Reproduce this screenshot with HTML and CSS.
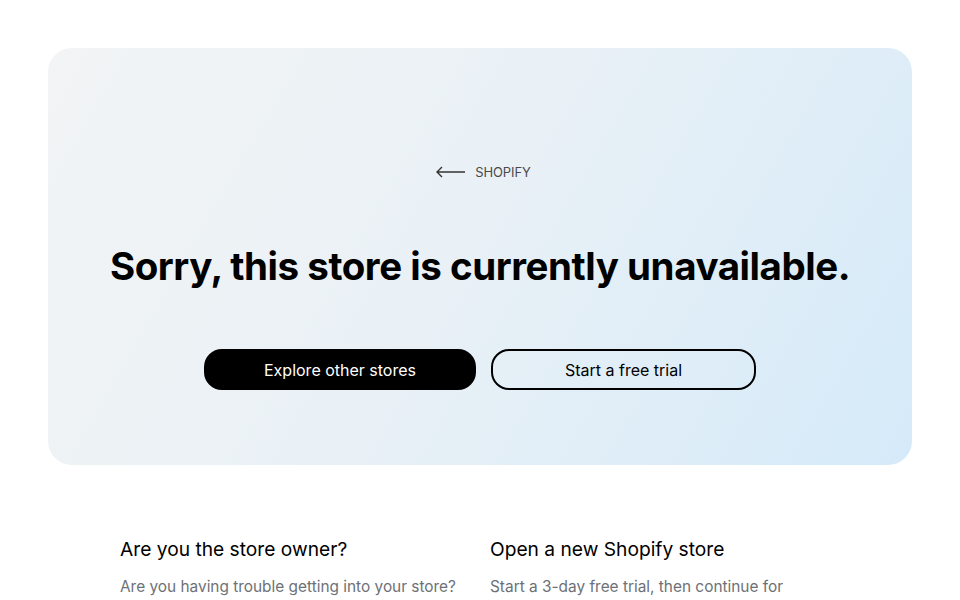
FILE: index.html
```html
<!DOCTYPE html>
<html lang="en">
<head>
<meta charset="utf-8">
<title>Store unavailable</title>
<link rel="stylesheet" href="styles.css">
</head>
<body>
<main class="page">
  <section class="hero">
    <a class="back" href="#">
      <svg class="back-arrow" width="30" height="12" viewBox="0 0 30 12" aria-hidden="true">
        <path d="M30 6H2M7 1L2 6l5 5" fill="none" stroke="#333" stroke-width="1.4"/>
      </svg>
      <span>SHOPIFY</span>
    </a>
    <h1 class="title">Sorry, this store is currently unavailable.</h1>
    <div class="actions">
      <a class="btn btn-primary" href="#">Explore other stores</a>
      <a class="btn btn-outline" href="#">Start a free trial</a>
    </div>
  </section>
  <section class="info">
    <div class="info-col">
      <h2 class="info-title">Are you the store owner?</h2>
      <p class="info-text">Are you having trouble getting into your store?</p>
    </div>
    <div class="info-col">
      <h2 class="info-title">Open a new Shopify store</h2>
      <p class="info-text">Start a 3-day free trial, then continue for</p>
    </div>
  </section>
</main>
</body>
</html>
```
FILE: styles.css
```css
* { box-sizing: border-box; }
html, body { margin: 0; padding: 0; background: #fff; }
body {
  font-family: Inter, "Noto Sans", "Liberation Sans", sans-serif;
  color: #000;
  overflow: hidden;
}
.page { padding: 48px 48px 0; }
.hero {
  height: 417px;
  border-radius: 24px;
  background: linear-gradient(120deg, #f2f4f5 0%, #eaf1f6 45%, #d5eaf9 100%);
  display: flex;
  flex-direction: column;
  align-items: center;
  padding-top: 116px;
}
.back {
  display: flex;
  align-items: center;
  gap: 10px;
  color: #4a4a4a;
  text-decoration: none;
  font-size: 13px;
  letter-spacing: -0.1px;
  margin-left: 6px;
}
.back-arrow { display: block; }
.title {
  margin: 62px 0 0;
  font-size: 38.5px;
  font-weight: 700;
  letter-spacing: -0.45px;
  line-height: 48px;
}
.actions {
  display: flex;
  gap: 15px;
  margin-top: 59px;
}
.btn {
  display: flex;
  align-items: center;
  justify-content: center;
  height: 41px;
  border-radius: 18px;
  font-size: 16px;
  text-decoration: none;
  border: 2px solid #000;
}
.btn-primary { width: 272px; background: #000; color: #fff; }
.btn-outline { width: 265px; color: #000; background: transparent; }
.info {
  display: grid;
  grid-template-columns: 370px 370px;
  padding: 70px 0 0 72px;
}
.info-title {
  margin: 0;
  font-size: 19.2px;
  font-weight: 400;
  line-height: 28px;
}
.info-text {
  margin: 12px 0 0;
  font-size: 15.4px;
  line-height: 24px;
  color: #6d7175;
}
```
